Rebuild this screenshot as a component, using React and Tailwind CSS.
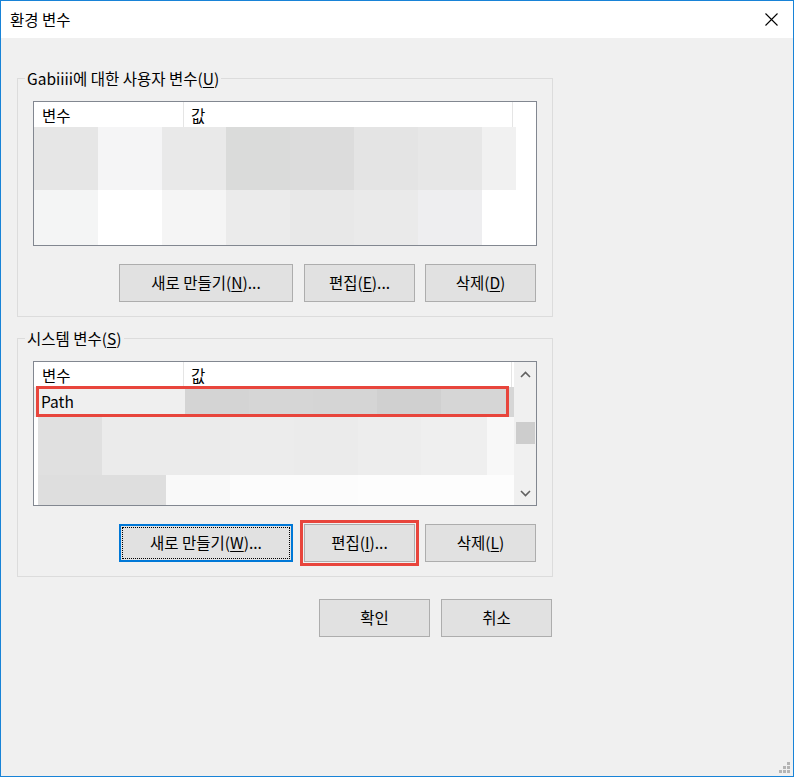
import React from "react";

const font = "font-['Noto_Sans_CJK_KR','Noto_Sans',sans-serif]";

function U({ children }) {
  return <span className="underline underline-offset-[2px] decoration-[1px]">{children}</span>;
}

function Btn({ w = "w-[111px]", children, focused = false, extra = "" }) {
  return (
    <div
      className={`relative ${w} h-[38px] flex items-center justify-center bg-[#e1e1e1] text-[15.5px] text-black ${
        focused ? "border-2 border-[#0078d7]" : "border border-[#adadad]"
      } ${extra}`}
    >
      {focused && <div className="absolute inset-[1px] border border-dotted border-black" />}
      <span className="leading-none">{children}</span>
    </div>
  );
}

function Group({ label, children }) {
  return (
    <div className="relative w-[536px] h-[239px] border border-[#dcdcdc] pt-[22px] pl-[15px]">
      <div className="absolute left-[7px] top-[-12px] px-[2px] bg-[#f0f0f0] text-[15.5px] leading-[22px] text-black">
        {label}
      </div>
      {children}
    </div>
  );
}

function Header({ scroll }) {
  return (
    <div className="flex h-[25px] bg-white text-[15.5px] text-black">
      <div className="w-[150px] pl-[8px] pt-[3px] leading-[20px] border-r border-[#e5e5e5]">변수</div>
      <div className={`${scroll ? "w-[328px]" : "w-[329px]"} pl-[7px] pt-[3px] leading-[20px] border-r border-[#e5e5e5]`}>값</div>
    </div>
  );
}

function Blocks({ h, cells }) {
  return (
    <div className="flex" style={{ height: h }}>
      {cells.map(([w, c], i) => (
        <div key={i} style={{ width: w, background: c }} />
      ))}
    </div>
  );
}

function Chevron({ up }) {
  return (
    <svg width="11" height="7" viewBox="0 0 11 7">
      <path
        d={up ? "M1 6 L5.5 1.5 L10 6" : "M1 1 L5.5 5.5 L10 1"}
        fill="none"
        stroke="#606060"
        strokeWidth="1.6"
      />
    </svg>
  );
}

export default function App() {
  return (
    <div className={`${font} w-[794px] h-[777px] border border-[#1883d7] flex flex-col relative overflow-hidden`}>
      {/* title bar */}
      <div className="h-[37px] bg-white flex items-center justify-between pl-[9px] pr-[15px]">
        <span className="text-[15.5px] text-black leading-none">환경 변수</span>
        <svg width="13" height="13" viewBox="0 0 13 13">
          <path d="M0.5 0.5 L12.5 12.5 M12.5 0.5 L0.5 12.5" stroke="#000" strokeWidth="1.1" />
        </svg>
      </div>

      {/* body */}
      <div className="flex-1 bg-[#f0f0f0] pl-[16px] pt-[40px]">
        <Group
          label={
            <>
              Gabiiii에 대한 사용자 변수(<U>U</U>)
            </>
          }
        >
          <div className="w-[504px] h-[145px] border border-[#828790] bg-white overflow-hidden">
            <Header />
            <Blocks
              h={63}
              cells={[
                [64, "#e6e6e6"],
                [64, "#f5f5f6"],
                [64, "#e9e9e9"],
                [64, "#dadbda"],
                [64, "#dcdcdc"],
                [64, "#e4e4e4"],
                [64, "#e7e7e7"],
                [34, "#f1f1f1"],
              ]}
            />
            <Blocks
              h={55}
              cells={[
                [64, "#f4f5f5"],
                [64, "#ffffff"],
                [64, "#f5f5f5"],
                [64, "#ebebeb"],
                [64, "#e8e8e8"],
                [64, "#eaeaea"],
                [64, "#eeeef0"],
                [34, "#ffffff"],
              ]}
            />
          </div>
          <div className="flex mt-[18px] pl-[86px]">
            <Btn w="w-[174px]">
              새로 만들기(<U>N</U>)...
            </Btn>
            <Btn extra="ml-[11px]">
              편집(<U>E</U>)...
            </Btn>
            <Btn extra="ml-[10px]">
              삭제(<U>D</U>)
            </Btn>
          </div>
        </Group>

        <div className="mt-[21px]">
          <Group
            label={
              <>
                시스템 변수(<U>S</U>)
              </>
            }
          >
            <div className="w-[504px] h-[145px] border border-[#828790] bg-white flex overflow-hidden">
              <div className="w-[480px] flex flex-col">
                <Header scroll />
                <div className="relative">
                  <div className="flex h-[30px] text-[15.5px] text-black">
                    <div className="w-[151px] bg-[#efefef] pl-[7px] pt-[4px] leading-[20px]">Path</div>
                    <div className="w-[64px] bg-[#d4d4d4]" />
                    <div className="w-[64px] bg-[#d6d6d6]" />
                    <div className="w-[64px] bg-[#d5d5d5]" />
                    <div className="w-[64px] bg-[#d0d0d0]" />
                    <div className="w-[73px] bg-[#d6d6d6]" />
                  </div>
                  <div className="absolute left-[2px] top-[-1px] w-[473px] h-[31px] border-[3px] border-[#e8453c]" />
                </div>
                <div className="pl-[4px]">
                  <Blocks
                    h={58}
                    cells={[
                      [64, "#e0e0e0"],
                      [65, "#ebebeb"],
                      [63, "#ebebeb"],
                      [64, "#ececec"],
                      [64, "#ebebeb"],
                      [63, "#ededed"],
                      [66, "#efefef"],
                      [27, "#f8f8f8"],
                    ]}
                  />
                  <Blocks
                    h={30}
                    cells={[
                      [128, "#dedede"],
                      [64, "#f9f9f9"],
                      [128, "#fcfcfc"],
                      [156, "#fdfdfd"],
                    ]}
                  />
                </div>
              </div>
              <div className="w-[22px] bg-[#f0f0f0] flex flex-col items-center">
                <div className="h-[22px] flex items-center justify-center mt-[1px]">
                  <Chevron up />
                </div>
                <div className="w-[19px] h-[22px] bg-[#cdcdcd] mt-[37px]" />
                <div className="flex-1" />
                <div className="h-[22px] flex items-center justify-center mb-[1px]">
                  <Chevron />
                </div>
              </div>
            </div>
            <div className="flex mt-[18px] pl-[86px]">
              <Btn w="w-[174px]" focused>
                새로 만들기(<U>W</U>)...
              </Btn>
              <div className="relative ml-[11px]">
                <Btn>
                  편집(<U>I</U>)...
                </Btn>
                <div className="absolute left-[-4px] top-[-4px] w-[119px] h-[46px] border-[3px] border-[#e8453c]" />
              </div>
              <Btn extra="ml-[10px]">
                삭제(<U>L</U>)
              </Btn>
            </div>
          </Group>
        </div>

        <div className="flex w-[536px] justify-end pr-[1px] mt-[22px]">
          <Btn>확인</Btn>
          <Btn extra="ml-[11px]">취소</Btn>
        </div>
      </div>

      {/* resize grip */}
      <svg className="absolute right-[2px] bottom-[2px]" width="12" height="12" viewBox="0 0 12 12">
        <rect x="8" y="0" width="3" height="3" fill="#b4b4b4" />
        <rect x="4" y="4" width="3" height="3" fill="#b4b4b4" />
        <rect x="8" y="4" width="3" height="3" fill="#b4b4b4" />
        <rect x="0" y="8" width="3" height="3" fill="#b4b4b4" />
        <rect x="4" y="8" width="3" height="3" fill="#b4b4b4" />
        <rect x="8" y="8" width="3" height="3" fill="#b4b4b4" />
      </svg>
    </div>
  );
}
